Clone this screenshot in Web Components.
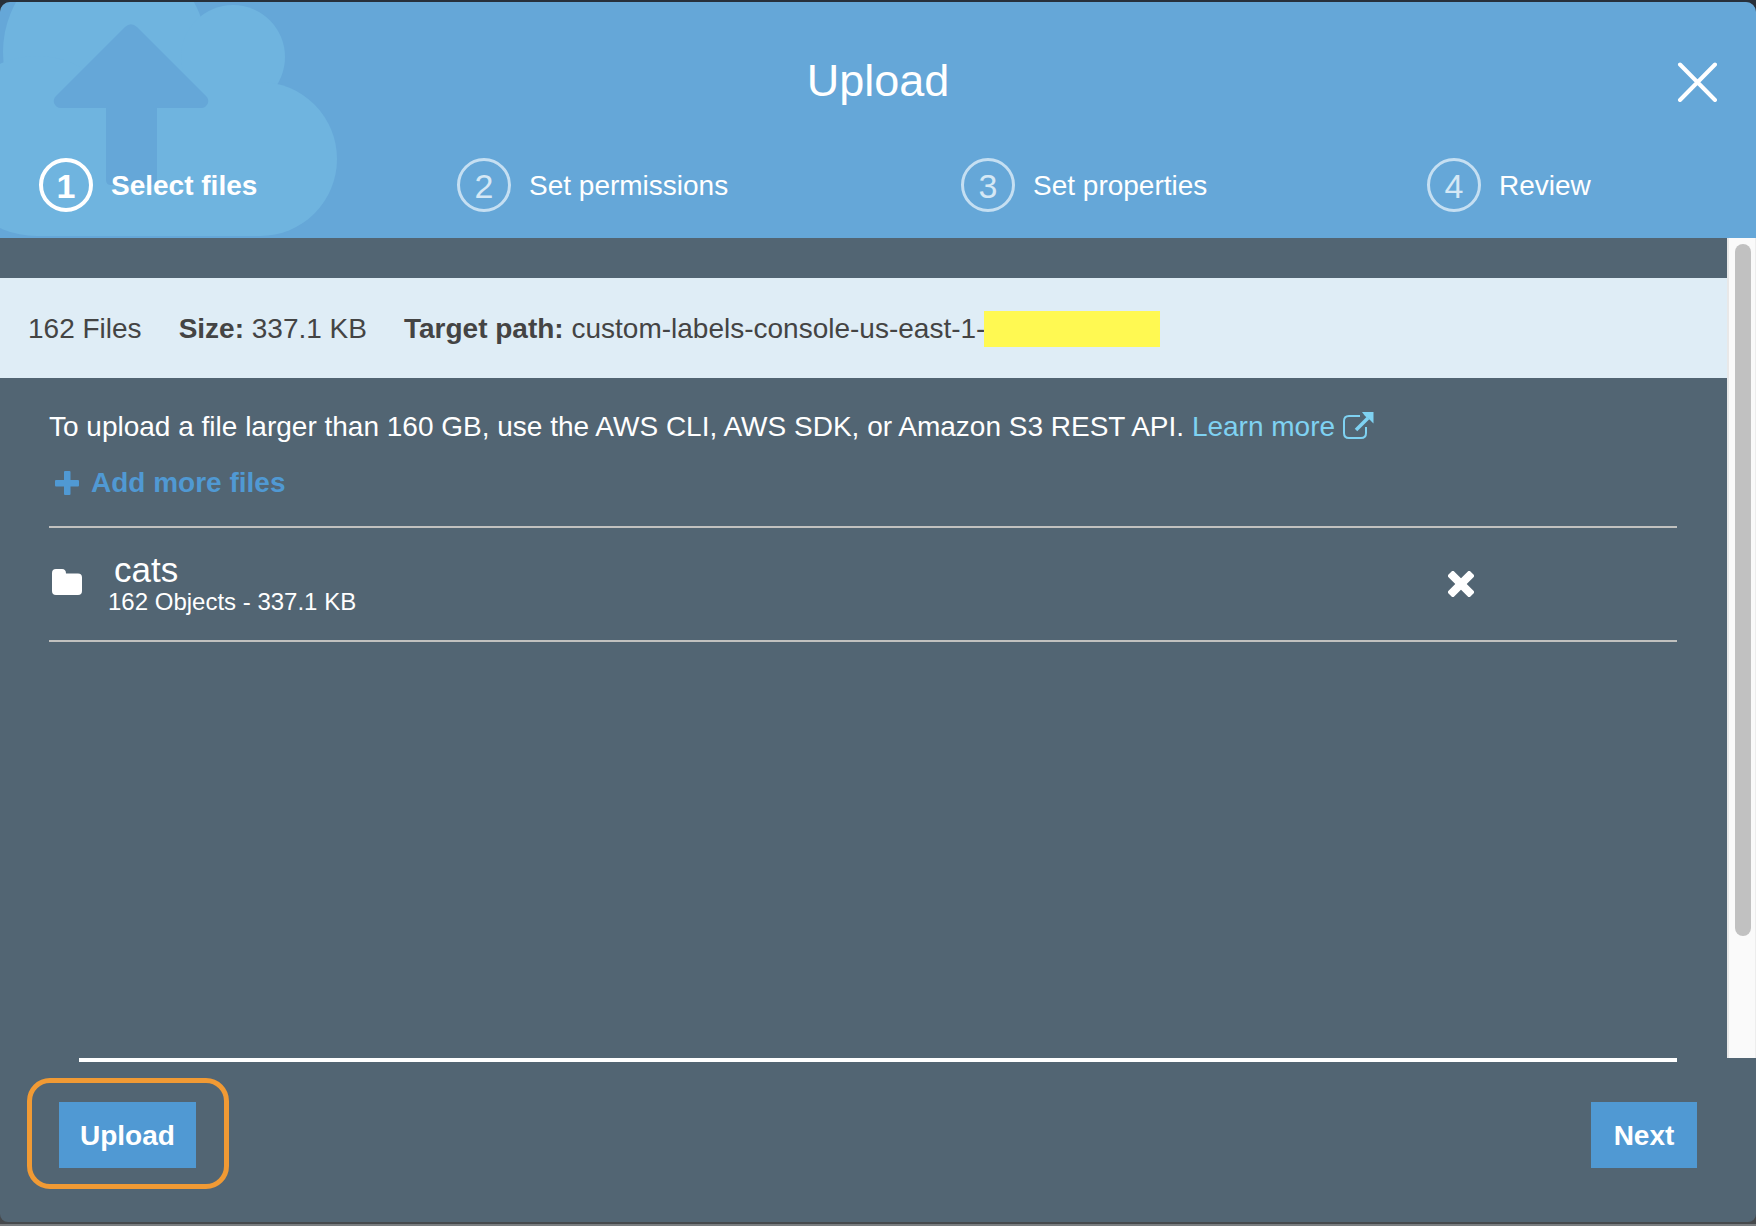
<!DOCTYPE html>
<html lang="en">
<head>
<meta charset="utf-8">
<title>Upload</title>
<style>
html, body { margin: 0; height: 100%; }
body { background: linear-gradient(#27303b 50%, #46494c 50%); font-family: "Liberation Sans", Arial, sans-serif; font-size: 28px; line-height: 36px; color: #fff; }
</style>
</head>
<body>
<upload-dialog>
  <dialog-header slot="header" heading="Upload">
    <wizard-step number="1" active>Select files</wizard-step>
    <wizard-step number="2">Set permissions</wizard-step>
    <wizard-step number="3">Set properties</wizard-step>
    <wizard-step number="4">Review</wizard-step>
  </dialog-header>
  <upload-summary>
    <span>162 Files</span>
    <span><b>Size:</b> 337.1 KB</span>
    <span><b>Target path:</b> custom-labels-console-us-east-1-</span>
  </upload-summary>
  <file-panel>
    <file-row name="cats" details="162 Objects - 337.1 KB"></file-row>
  </file-panel>
  <dialog-footer slot="footer">
    <action-button slot="start" highlighted>Upload</action-button>
    <action-button>Next</action-button>
  </dialog-footer>
</upload-dialog>

<script>
function define(name, render) {
  customElements.define(name, class extends HTMLElement {
    connectedCallback() {
      if (this.shadowRoot) return;
      this.attachShadow({ mode: 'open' }).innerHTML =
        '<style>*{box-sizing:border-box} button{font:inherit;color:inherit;background:none;border:0;padding:0;margin:0;cursor:pointer} svg{display:block}</style>' + render(this);
    }
  });
}

define('upload-dialog', () => `
<style>
  :host { display: flex; flex-direction: column; box-sizing: border-box; min-height: 100vh; padding-top: 2px; border-bottom: 2px solid #797d80; }
  .frame { flex: 1; display: flex; flex-direction: column; margin-bottom: 2px; background: #526573; border-radius: 10px 10px 8px 8px; overflow: hidden; }
  .body { flex: 1; display: flex; }
  .content { flex: 1; padding-top: 40px; }
  .track { width: 29px; padding: 6px 4px 6px 6px; background: #fafafa; border-left: 2px solid #e8e8e8; border-right: 1px solid #ededed; }
  .thumb { width: 16px; height: 85.6%; border-radius: 8px; background: #c1c1c1; }
</style>
<div class="frame" role="dialog" aria-label="Upload">
  <slot name="header"></slot>
  <div class="body">
    <main class="content"><slot></slot></main>
    <div class="track"><div class="thumb"></div></div>
  </div>
  <slot name="footer"></slot>
</div>`);

define('dialog-header', el => `
<style>
  :host { display: grid; background: #65a7d8; height: 236px; }
  .cloud, .bar { grid-area: 1 / 1; }
  .bar { display: flex; flex-direction: column; }
  .top { display: grid; grid-template-columns: 1fr auto 1fr; align-items: center; height: 156px; padding: 4px 39px 0; }
  h1 { grid-column: 2; margin: 0; padding-bottom: 2px; font-size: 45px; line-height: 52px; font-weight: 400; }
  .close { justify-self: end; }
  nav { display: grid; grid-template-columns: 418fr 504fr 466fr 329fr; padding-left: 39px; }
</style>
<svg class="cloud" width="340" height="236" viewBox="0 2 340 236" aria-hidden="true">
  <g fill="#6fb4df">
    <circle cx="105" cy="52" r="102"/><circle cx="233" cy="57" r="52"/>
    <circle cx="260" cy="159" r="77"/><circle cx="37" cy="146" r="90"/>
    <path d="M37 80H260V236H37Z"/>
  </g>
  <path fill="#65a7d8" d="M125 27Q131 21.500 137 27L206 96Q209 99 208 103Q206 108 201 108H157V180Q157 185 152 185H111Q106 185 106 180V108H61Q56 108 54 103Q53 99 56 96Z"/>
</svg>
<div class="bar">
  <div class="top">
    <h1>${el.getAttribute('heading')}</h1>
    <button class="close" aria-label="Close"><svg width="40" height="40" viewBox="0 0 40 40" stroke="#fff" stroke-width="4" stroke-linecap="round"><path d="M3 2.500L38 38M38 2.500L3 38"/></svg></button>
  </div>
  <nav aria-label="Steps"><slot></slot></nav>
</div>`);

define('wizard-step', el => `
<style>
  :host { display: flex; align-items: center; gap: 18px; white-space: nowrap; }
  .num { display: flex; align-items: center; justify-content: center; width: 54px; height: 54px; padding-top: 2px; border: 3px solid #c5dff2; border-radius: 50%; color: #d5e8f5; font-size: 34px; }
  .label { padding-top: 2px; }
  :host([active]) { font-weight: 700; }
  :host([active]) .num { border: 4px solid #fff; color: #fff; }
</style>
<span class="num">${el.getAttribute('number')}</span><span class="label"><slot></slot></span>`);

define('upload-summary', () => `
<style>
  :host { display: flex; align-items: center; gap: 37px; height: 100px; padding: 2px 0 0 28px; box-sizing: border-box; background: #dfedf6; color: #444; white-space: nowrap; }
  .mask { width: 176px; height: 36px; margin-left: -38px; background: #fff952; }
</style>
<slot></slot><span class="mask"></span>`);

define('file-panel', () => `
<style>
  :host { display: block; padding: 31px 50px 0 49px; }
  p { margin: 0; }
  a { color: #7fd2f2; text-decoration: none; }
  a svg { display: inline-block; vertical-align: -3px; }
  .add { display: flex; align-items: center; gap: 12px; margin: 20px 0 25px 6px; color: #5099d3; font-weight: 700; }
</style>
<p>To upload a file larger than 160 GB, use the AWS CLI, AWS SDK, or Amazon S3 REST API. <a href="#">Learn more <svg width="31" height="27" viewBox="0 0 31 27" fill="none" stroke="#7fd2f2" stroke-width="2"><path d="M17 4H6Q1 4 1 9V21Q1 26 6 26H18Q23 26 23 21V15"/><path stroke-width="3.500" d="M13 18L25 6"/><path fill="#7fd2f2" stroke="none" d="M19 0H30.500V11.500L27 8L22 4Z"/></svg></a></p>
<button class="add"><svg width="24" height="24" viewBox="0 0 24 24" fill="#5099d3"><rect x="9" width="6.500" height="24" rx="1"/><rect y="9" width="24" height="6.500" rx="1"/></svg>Add more files</button>
<div role="list"><slot></slot></div>`);

define('file-row', el => `
<style>
  :host { display: flex; align-items: center; height: 116px; box-sizing: border-box; border: solid #c1c1bf; border-width: 2px 0; padding-left: 3px; }
  .folder { margin-bottom: 4px; }
  .text { flex: 1; padding-left: 26px; }
  .name { font-size: 35px; line-height: 36px; padding-left: 6px; }
  .details { font-size: 24px; line-height: 28px; }
  button { margin-right: 203px; }
</style>
<svg class="folder" width="30" height="26" viewBox="0 0 30 26" fill="#fff"><path d="M4 0H10Q14 0 14 4.500H26Q30 4.500 30 8.500V22Q30 26 26 26H4Q0 26 0 22V4Q0 0 4 0Z"/></svg>
<div class="text"><div class="name">${el.getAttribute('name')}</div><div class="details">${el.getAttribute('details')}</div></div>
<button aria-label="Remove"><svg width="26" height="26" viewBox="0 0 26 26" fill="#fff"><g transform="rotate(45 13 13)"><rect x="-2.500" y="9" width="31" height="8" rx="1.500"/><rect x="9" y="-2.500" width="8" height="31" rx="1.500"/></g></svg></button>`);

define('dialog-footer', () => `
<style>
  :host { display: block; height: 164px; }
  .rule { height: 4px; margin: 0 79px; background: #fff; }
  .row { display: flex; justify-content: space-between; align-items: flex-start; padding: 40px 59px 0; }
</style>
<div class="rule"></div>
<div class="row"><slot name="start"></slot><slot></slot></div>`);

define('action-button', () => `
<style>
  :host { display: block; position: relative; }
  button { min-width: 106px; height: 66px; padding: 2px 21px 0; background: #5099d3; font-weight: 700; }
  :host([highlighted])::after { content: ""; position: absolute; inset: -24px -33px -21px -32px; border: 5px solid #f19a34; border-radius: 23px; pointer-events: none; }
</style>
<button><slot></slot></button>`);
</script>
</body>
</html>
